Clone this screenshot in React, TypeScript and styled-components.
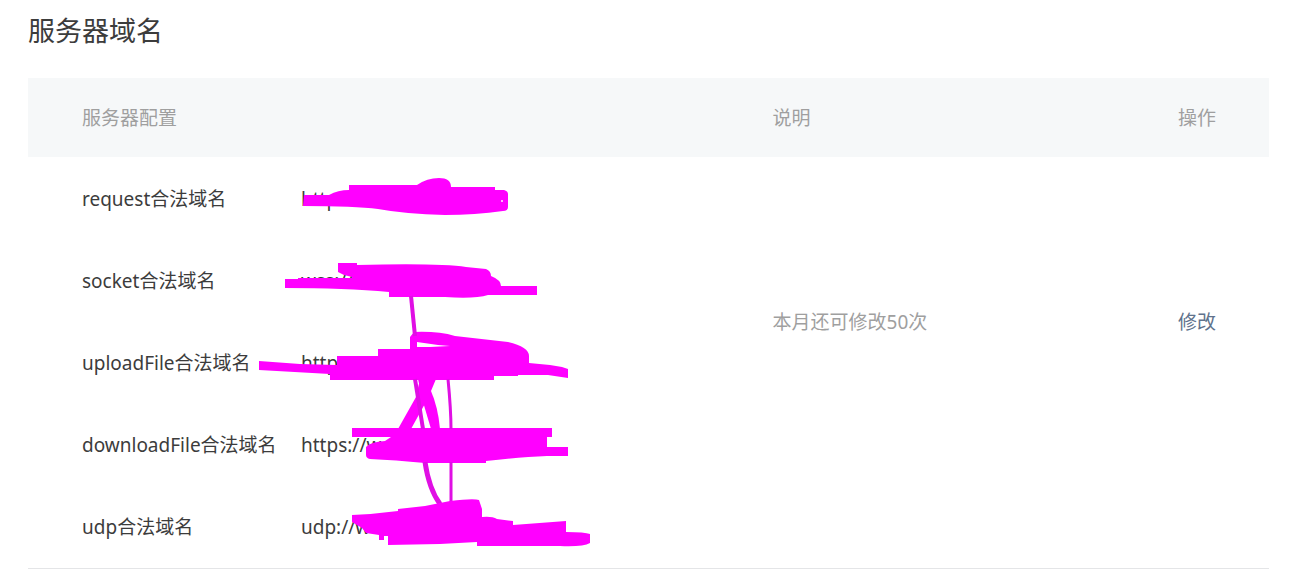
import React from "react";
import styled, { createGlobalStyle } from "styled-components";

const GlobalStyle = createGlobalStyle`
  body {
    margin: 0;
    background: #ffffff;
    color: #3c3c3c;
    font-family: "Noto Sans", "Noto Sans CJK SC", sans-serif;
    font-size: 19px;
    line-height: 30px;
  }
`;

const Page = styled.main`
  padding: 11px 30px 14px 28px;
`;

const Title = styled.h1`
  margin: 0 0 27px;
  font-size: 27px;
  font-weight: 400;
  line-height: 40px;
`;

const TableArea = styled.section`
  position: relative;
`;

const Table = styled.table`
  width: 100%;
  table-layout: fixed;
  border-collapse: separate;
  border-spacing: 0;
  border-bottom: 1px solid #e4e5e7;
`;

const LabelCol = styled.col`
  width: 273px;
`;

const ValueCol = styled.col`
  width: 38%;
`;

const ActionCol = styled.col`
  width: 160px;
`;

const HeadCell = styled.th<{ $edge?: "start" | "end" }>`
  height: 79px;
  padding: 0 ${(p) => (p.$edge === "end" ? 53 : 0)}px 0 ${(p) => (p.$edge === "start" ? 54 : 0)}px;
  border-bottom: 1px solid #ffffff;
  background: #f6f8f9;
  background-clip: padding-box;
  color: #9f9f9f;
  font-weight: 400;
  text-align: ${(p) => (p.$edge === "end" ? "right" : "left")};
`;

const RowLabel = styled.th`
  height: 82px;
  padding: 0 0 0 54px;
  font-weight: 400;
  text-align: left;
  white-space: nowrap;
`;

const Cell = styled.td`
  padding: 0;
`;

const NoteCell = styled(Cell)`
  color: #9f9f9f;
`;

const ActionCell = styled(Cell)`
  padding-right: 53px;
  text-align: right;
`;

const EditLink = styled.a`
  color: #60728c;
  text-decoration: none;
`;

const Scribble = styled.svg`
  position: absolute;
  top: 92px;
  left: 222px;
  pointer-events: none;
`;

const domains = [
  { name: "request", value: "https://w" },
  { name: "socket", value: "wss://www" },
  { name: "uploadFile", value: "https://w" },
  { name: "downloadFile", value: "https://w" },
  { name: "udp", value: "udp://w" },
];

const SHARED_ROWS = 4;

function Redaction() {
  return (
    <Scribble width="350" height="380" viewBox="250 170 350 380" fill="#ff00ff" aria-hidden="true">
      <path d="M304 195H329Q338 190 349 190V185H417Q427 178 439 178Q451 178 451 187H495V190H504Q508 191 508 194V207Q508 211 503 211Q475 215 445 215Q405 214 378 209Q355 206 303 206Z" />
      <rect x="501" y="200" width="2" height="2" fill="#ffb0ff" />
      <path d="M285 279H298V278H352V277L344 275L338 272V263H357V265Q440 263 466 267L486 269Q491 271 491 276Q501 280 501 286H537V295H488Q475 299 445 297H389V292Q345 288 285 288Z" />
      <path
        fillRule="evenodd"
        d="M259 361L300 364L337 365V356H378V349H410V337L414 332Q438 331 455 336L508 342Q529 347 529 356V363L550 365L562 367L568 369V378L548 375H518V376H494V380H330V374L259 370ZM417 342L438 345L450 346L430 347H417Z"
      />
      <path d="M352 428H552V437H547V447H568V456H547Q520 457 486 461V463H425Q395 460 370 459Q366 458 366 455V447Q370 442 385 441L391 437H352Z" />
      <path d="M420 379H436L431 391L427 400L411 429H398L416 397Z" />
      <path d="M418 379H425L431 391Q438 407 440 429H431L423 402Z" />
      <g fill="none" stroke="#e00fe4">
        <path d="M411 296L415 336" strokeWidth="4" />
        <path d="M415 379L423 429" strokeWidth="4" />
        <path d="M448 379Q451 410 451 429M451 462V503" strokeWidth="3" />
        <path d="M425 462Q429 489 440 504" strokeWidth="5" />
      </g>
      <path d="M352 515Q375 514 398 511V509L425 506L450 501Q474 498 479 500L482 509V517Q492 516 497 519L513 521V525L566 521V532Q585 532 590 534V543Q583 547 560 546H477V542L440 544L388 545V536H384V540H379V535L366 533L362 528L352 522Z" />
    </Scribble>
  );
}

export default function App() {
  return (
    <Page>
      <GlobalStyle />
      <Title>服务器域名</Title>
      <TableArea>
        <Table>
          <colgroup>
            <LabelCol />
            <ValueCol />
            <col />
            <ActionCol />
          </colgroup>
          <thead>
            <tr>
              <HeadCell scope="col" colSpan={2} $edge="start">服务器配置</HeadCell>
              <HeadCell scope="col">说明</HeadCell>
              <HeadCell scope="col" $edge="end">操作</HeadCell>
            </tr>
          </thead>
          <tbody>
            {domains.map((domain, index) => (
              <tr key={domain.name}>
                <RowLabel scope="row">{domain.name}合法域名</RowLabel>
                <Cell>{domain.value}</Cell>
                {index === 0 && (
                  <>
                    <NoteCell rowSpan={SHARED_ROWS}>本月还可修改50次</NoteCell>
                    <ActionCell rowSpan={SHARED_ROWS}>
                      <EditLink href="#edit">修改</EditLink>
                    </ActionCell>
                  </>
                )}
                {index >= SHARED_ROWS && (
                  <>
                    <Cell />
                    <Cell />
                  </>
                )}
              </tr>
            ))}
          </tbody>
        </Table>
        <Redaction />
      </TableArea>
    </Page>
  );
}
